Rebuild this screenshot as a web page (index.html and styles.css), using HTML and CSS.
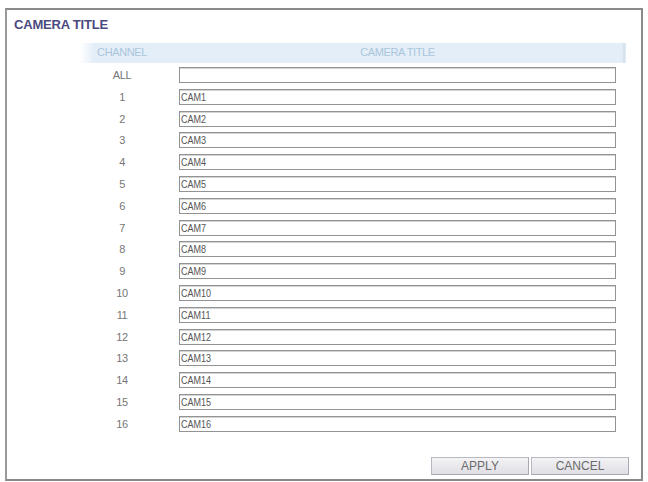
FILE: index.html
```html
<!DOCTYPE html>
<html>
<head>
<meta charset="utf-8">
<link rel="stylesheet" href="styles.css">
</head>
<body>
<div class="panel">
  <div class="title">CAMERA TITLE</div>
  <div class="table">
    <div class="head">
      <div class="hcell">CHANNEL</div>
      <div></div>
      <div class="hcell">CAMERA TITLE</div>
      <div></div>
    </div>
    <div class="rows">
      <div class="row"><div class="ch">ALL</div><div></div><div class="field"></div></div>
      <div class="row"><div class="ch">1</div><div></div><div class="field"><span class="txt">CAM1</span></div></div>
      <div class="row"><div class="ch">2</div><div></div><div class="field"><span class="txt">CAM2</span></div></div>
      <div class="row"><div class="ch">3</div><div></div><div class="field"><span class="txt">CAM3</span></div></div>
      <div class="row"><div class="ch">4</div><div></div><div class="field"><span class="txt">CAM4</span></div></div>
      <div class="row"><div class="ch">5</div><div></div><div class="field"><span class="txt">CAM5</span></div></div>
      <div class="row"><div class="ch">6</div><div></div><div class="field"><span class="txt">CAM6</span></div></div>
      <div class="row"><div class="ch">7</div><div></div><div class="field"><span class="txt">CAM7</span></div></div>
      <div class="row"><div class="ch">8</div><div></div><div class="field"><span class="txt">CAM8</span></div></div>
      <div class="row"><div class="ch">9</div><div></div><div class="field"><span class="txt">CAM9</span></div></div>
      <div class="row"><div class="ch">10</div><div></div><div class="field"><span class="txt">CAM10</span></div></div>
      <div class="row"><div class="ch">11</div><div></div><div class="field"><span class="txt">CAM11</span></div></div>
      <div class="row"><div class="ch">12</div><div></div><div class="field"><span class="txt">CAM12</span></div></div>
      <div class="row"><div class="ch">13</div><div></div><div class="field"><span class="txt">CAM13</span></div></div>
      <div class="row"><div class="ch">14</div><div></div><div class="field"><span class="txt">CAM14</span></div></div>
      <div class="row"><div class="ch">15</div><div></div><div class="field"><span class="txt">CAM15</span></div></div>
      <div class="row"><div class="ch">16</div><div></div><div class="field"><span class="txt">CAM16</span></div></div>
    </div>
  </div>
  <div class="footer">
    <div class="btn">APPLY</div>
    <div class="btn">CANCEL</div>
  </div>
</div>
</body>
</html>
```
FILE: styles.css
```css
html, body {
  margin: 0;
  padding: 0;
  background: #ffffff;
}
body {
  font-family: "Liberation Sans", Arial, sans-serif;
  width: 648px;
  height: 482px;
  overflow: hidden;
}
.panel {
  box-sizing: border-box;
  margin: 8px 0 0 5px;
  width: 638px;
  height: 473px;
  border: 2px solid #8a8a8a;
  border-left-color: #9a9a9a;
  display: flex;
  flex-direction: column;
}
.title {
  font-size: 13px;
  font-weight: bold;
  line-height: 15px;
  color: #4b4a80;
  padding: 7px 0 0 7px;
  height: 18px;
  letter-spacing: -0.2px;
}
.table {
  margin: 8px 0 0 73px;
  width: 546px;
}
.head {
  display: grid;
  grid-template-columns: 84px 15px 437px 10px;
  height: 20px;
  background: linear-gradient(to right, #ffffff 0px, #e4eef8 14px, #e4eef8 542px, #d3dfea 544px, #e4eef8 546px);
}
.hcell {
  font-size: 11px;
  line-height: 18px;
  color: #a9c6dc;
  text-align: center;
  letter-spacing: -0.4px;
}
.rows {
  display: flex;
  flex-direction: column;
  gap: 5.8px;
  padding-top: 4px;
}
.row {
  display: grid;
  grid-template-columns: 84px 15px 437px;
  height: 16px;
}
.ch {
  font-size: 11px;
  line-height: 16px;
  color: #767676;
  text-align: center;
  letter-spacing: -0.4px;
}
.field {
  box-sizing: border-box;
  height: 16px;
  border: 1px solid #939393;
  box-shadow: inset 0 1px 0 #d4d4d4;
  background: #ffffff;
  font-size: 11px;
  line-height: 14px;
  color: #555555;
  padding-left: 1px;
}
.txt {
  display: inline-block;
  transform: scaleX(0.82);
  transform-origin: left center;
}
.footer {
  margin-top: auto;
  display: flex;
  justify-content: flex-end;
  gap: 2px;
  padding: 0 12px 4px 0;
}
.btn {
  box-sizing: border-box;
  width: 98px;
  height: 18px;
  border: 1px solid #b9b9c2;
  border-right-color: #a8a8b2;
  border-bottom-color: #a8a8b2;
  background: linear-gradient(to bottom, #f4f4f6, #dedee4);
  font-size: 12px;
  line-height: 16px;
  color: #6a6a6a;
  text-align: center;
}
```
